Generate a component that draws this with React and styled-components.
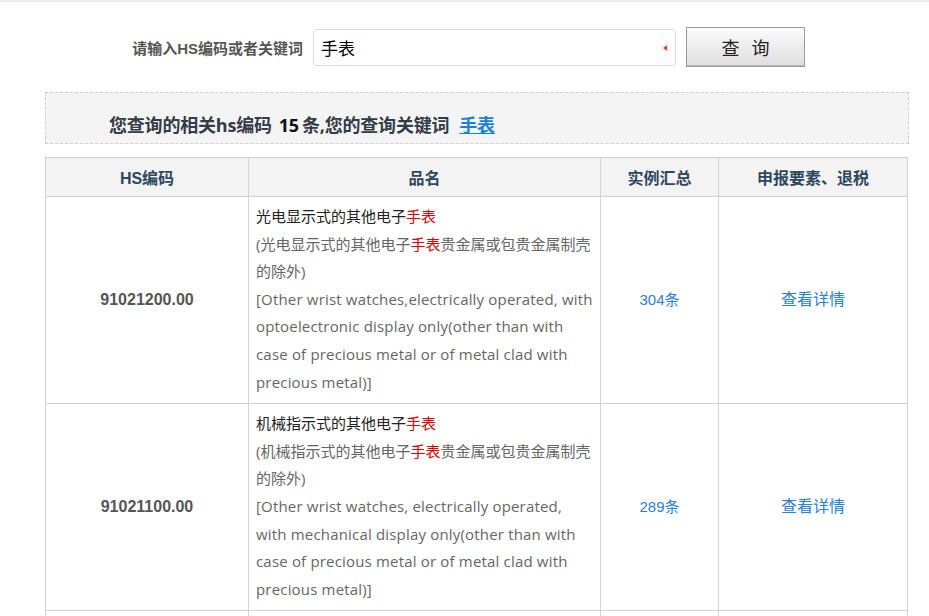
import React from "react";
import styled, { createGlobalStyle } from "styled-components";

const Global = createGlobalStyle`
  html, body { margin: 0; padding: 0; background: #fff; }
  body { font-family: "Open Sans", "Noto Sans CJK SC", sans-serif; }
`;

const Page = styled.div`
  width: 929px;
  height: 616px;
  overflow: hidden;
  border-top: 2px solid #ececec;
  box-sizing: border-box;
`;

const SearchRow = styled.div`
  display: flex;
  align-items: center;
  padding: 25px 0 0 123px;
  gap: 10px;
`;

const Label = styled.label`
  font-family: "Liberation Sans", "Noto Sans CJK SC", sans-serif;
  font-size: 15px;
  font-weight: bold;
  color: #555;
  width: 180px;
  text-align: right;
  white-space: nowrap;
`;

const InputWrap = styled.div`
  position: relative;
  width: 363px;
  height: 37px;
  border: 1px solid #dcdcdc;
  border-radius: 3px;
  box-sizing: border-box;
  display: flex;
  align-items: center;
  padding-left: 7px;
  font-family: "Noto Sans CJK SC", sans-serif;
  font-size: 17px;
  color: #000;
`;

const Caret = styled.span`
  position: absolute;
  right: 8px;
  top: 15px;
  width: 0;
  height: 0;
  border-top: 3px solid transparent;
  border-bottom: 3px solid transparent;
  border-right: 4px solid #e8442e;
`;

const Button = styled.button`
  width: 119px;
  height: 40px;
  border: 1px solid #9a9a9a;
  background: linear-gradient(#fbfbfb, #dedede);
  font-family: "Noto Sans CJK SC", sans-serif;
  font-size: 18px;
  color: #222;
  letter-spacing: 12px;
  padding: 0 0 0 12px;
  box-shadow: inset 0 -1px 0 #bbb;
`;

const Summary = styled.div`
  margin: 25px 0 0 45px;
  width: 864px;
  height: 52px;
  box-sizing: border-box;
  border: 1px dashed #cfcfcf;
  background: #f4f4f4;
  padding: 19px 0 0 63px;
  font-family: "Open Sans", "Noto Sans CJK SC", sans-serif;
  font-size: 18px;
  font-weight: bold;
  line-height: 26px;
  color: #333b47;
  letter-spacing: -0.2px;
`;

const Count = styled.span`
  color: #111;
  margin: 0 3px 0 7px;
`;

const Keyword = styled.a`
  color: #1a7fe0;
  text-decoration: underline;
  margin-left: 10px;
`;

const Table = styled.table`
  margin: 13px 0 0 45px;
  width: 862px;
  border-collapse: collapse;
  table-layout: fixed;
`;

const Th = styled.th`
  height: 39px;
  padding: 0;
  background: #f3f3f3;
  border: 1px solid #d3d3d3;
  font-family: "Liberation Sans", "Noto Sans CJK SC", sans-serif;
  font-size: 16px;
  font-weight: bold;
  color: #2e4760;
  text-align: center;
  box-sizing: border-box;
`;

const Td = styled.td`
  border: 1px solid #d3d3d3;
  padding: ${(p) => (p.$text ? "6px 6px 7px 7px" : "0")};
  text-align: ${(p) => (p.$text ? "left" : "center")};
  vertical-align: middle;
  font-size: 15px;
  line-height: 27.6px;
`;

const Code = styled.span`
  font-family: "Liberation Sans", Arial, sans-serif;
  font-weight: bold;
  font-size: 16px;
  color: #555;
`;

const Title = styled.div`
  color: #222;
`;

const Hit = styled.span`
  color: #e00000;
`;

const Desc = styled.div`
  color: #666;
  letter-spacing: ${(p) => (p.$en ? "0.18px" : "0")};
`;

const LinkText = styled.a`
  font-family: "Liberation Sans", "Noto Sans CJK SC", sans-serif;
  color: #2a80d6;
  font-size: ${(p) => (p.$big ? "16px" : "15px")};
  text-decoration: none;
`;

const rows = [
  {
    code: "91021200.00",
    pre: "光电显示式的其他电子",
    cnPre: "(光电显示式的其他电子",
    en: "[Other wrist watches,electrically operated, with optoelectronic display only(other than with case of precious metal or of metal clad with precious metal)]",
    count: "304条",
  },
  {
    code: "91021100.00",
    pre: "机械指示式的其他电子",
    cnPre: "(机械指示式的其他电子",
    en: "[Other wrist watches, electrically operated, with mechanical display only(other than with case of precious metal or of metal clad with precious metal)]",
    count: "289条",
  },
  {
    code: "91021900.00",
    pre: "其他电子",
    cnPre: "(其他电子",
    en: "[Other wrist watches, electrically operated (other than with case of precious metal or of metal clad with precious metal)]",
    count: "215条",
  },
];

export default function App() {
  return (
    <Page>
      <Global />
      <SearchRow>
        <Label>请输入HS编码或者关键词</Label>
        <InputWrap>
          手表
          <Caret />
        </InputWrap>
        <Button>查询</Button>
      </SearchRow>
      <Summary>
        您查询的相关hs编码<Count>15</Count>条,您的查询关键词
        <Keyword>手表</Keyword>
      </Summary>
      <Table>
        <colgroup>
          <col style={{ width: 203 }} />
          <col style={{ width: 352 }} />
          <col style={{ width: 118 }} />
          <col style={{ width: 189 }} />
        </colgroup>
        <thead>
          <tr>
            <Th>HS编码</Th>
            <Th>品名</Th>
            <Th>实例汇总</Th>
            <Th>申报要素、退税</Th>
          </tr>
        </thead>
        <tbody>
          {rows.map((r) => (
            <tr key={r.code}>
              <Td>
                <Code>{r.code}</Code>
              </Td>
              <Td $text>
                <Title>
                  {r.pre}
                  <Hit>手表</Hit>
                </Title>
                <Desc>
                  {r.cnPre}
                  <Hit>手表</Hit>贵金属或包贵金属制壳的除外)
                </Desc>
                <Desc $en>{r.en}</Desc>
              </Td>
              <Td>
                <LinkText>{r.count}</LinkText>
              </Td>
              <Td>
                <LinkText $big>查看详情</LinkText>
              </Td>
            </tr>
          ))}
        </tbody>
      </Table>
    </Page>
  );
}
